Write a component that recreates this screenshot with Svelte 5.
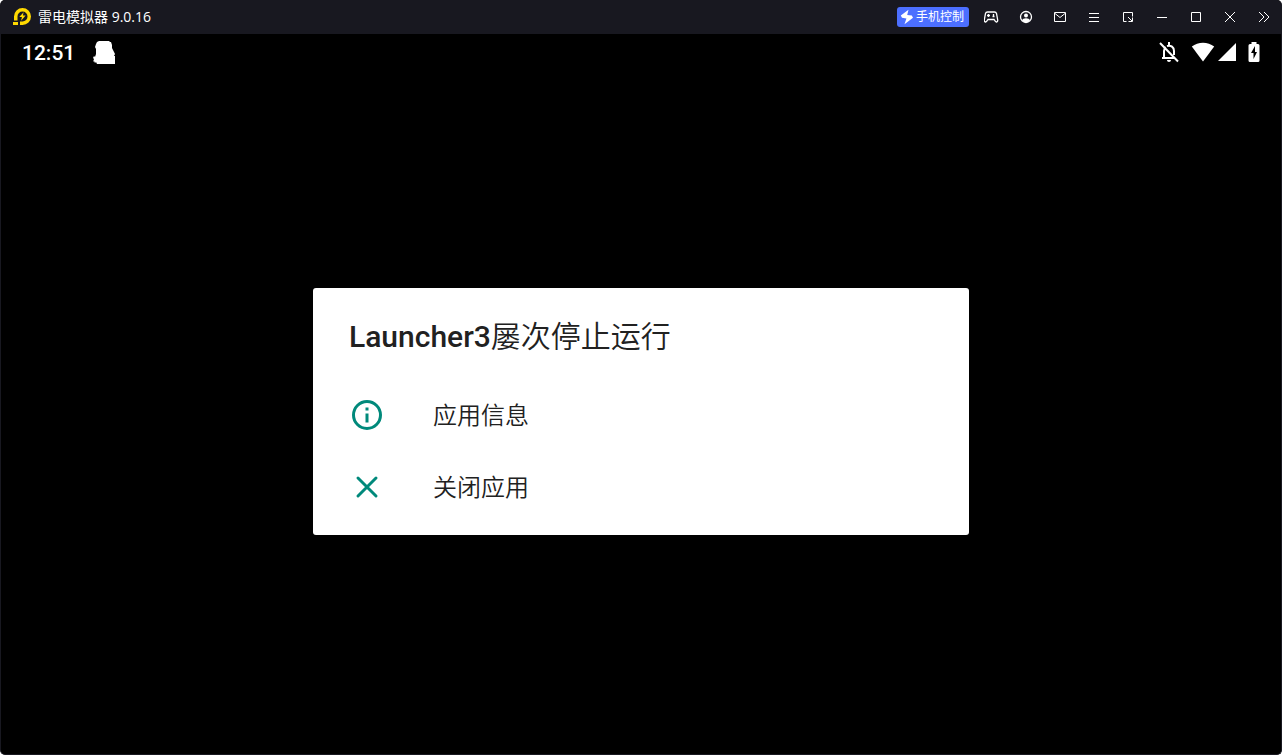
<script lang="ts">
	// Emulator window: desktop title bar, Android status bar and the crash dialog.
	const title = '雷电模拟器 9.0.16';
	const appName = 'Launcher3';
</script>

<div class="window">
	<header class="titlebar">
		<svg class="logo" width="20" height="20" viewBox="0 0 20 20" aria-hidden="true">
			<path d="M2 13.500V9.500a8.500 8.500 0 1 1 8.500 8.500H8v-3.500h2.500A5 5 0 1 0 5.500 9.500v4z" fill="#ffd900" />
			<path d="M1 15h5v3H1z" fill="#ffd900" />
			<path d="M11.600 5.200 7.300 10h2.600l-.8 3.800 4.500-5.200h-2.700z" fill="#ffd900" />
		</svg>
		<h1>{title}</h1>

		<button class="phone">
			<svg width="14" height="16" viewBox="0 0 14 16" aria-hidden="true">
				<path d="M8.500.8.800 6.500 2 8.800l4.400.7-1.900 5.700 8.500-6.400-1.200-2.300-4.600-.5z" fill="#fff" />
			</svg>
			<span>手机控制</span>
		</button>

		<nav class="tools">
			<button aria-label="手柄">
				<svg width="16" height="16" viewBox="0 0 16 16">
					<path
						d="M3.500 3h7c1.200 0 1.700.5 2 1.500l1.200 6.500c.2 2-1.500 2.600-2.500 1.200L10 10.500H4l-1.200 1.700C1.800 13.600.1 13 .3 11l1.200-6.500C1.800 3.500 2.300 3 3.500 3z"
						class="pad"
					/>
					<path d="M4.500 5v3M3 6.500h3M9.500 5v2M8.500 7.500h2" class="pad" />
				</svg>
			</button>
			<button aria-label="账号">
				<svg width="16" height="16" viewBox="0 0 16 16">
					<circle cx="8" cy="8" r="5.500" class="pad" />
					<circle cx="8" cy="6.500" r="2" class="solid" />
					<path d="M4 11.500c.6-3 7.400-3 8 0-1.800 2.600-6.200 2.600-8 0z" class="solid" />
				</svg>
			</button>
			<button aria-label="消息">
				<svg width="16" height="16" viewBox="0 0 16 16">
					<path d="M2.500 3.500h11v9h-11zM3 4.500l5 4 5-4" />
				</svg>
			</button>
			<button aria-label="菜单">
				<svg width="16" height="16" viewBox="0 0 16 16">
					<path d="M3 4.500h10M3 8.500h10M3 12.500h10" />
				</svg>
			</button>
			<button aria-label="小窗">
				<svg width="16" height="16" viewBox="0 0 16 16">
					<path d="M6.500 12.500h-3v-9h9v4M8 8l4 4M12.500 8.500v4h-4" />
				</svg>
			</button>
			<button aria-label="最小化">
				<svg width="16" height="16" viewBox="0 0 16 16"><path d="M3 8.500h10" /></svg>
			</button>
			<button aria-label="最大化">
				<svg width="16" height="16" viewBox="0 0 16 16"><path d="M3.500 3.500h9v9h-9z" /></svg>
			</button>
			<button aria-label="关闭">
				<svg width="16" height="16" viewBox="0 0 16 16"><path d="m3 3 10 10M13 3 3 13" /></svg>
			</button>
			<button aria-label="展开">
				<svg width="16" height="16" viewBox="0 0 16 16">
					<path d="m3 3 5 5-5 5M8 3l5 5-5 5" />
				</svg>
			</button>
		</nav>
	</header>

	<div class="status">
		<time>12:51</time>
		<svg class="notice" width="24" height="24" viewBox="0 0 24 24" aria-hidden="true">
			<path
				d="M8 1h10l1 1h1l1 3v3l2 4 1 2-1 2h1v8H6l-1-2-1 1-1-2-1 1 1-3-1-1 1-2 1 1 1-3V9L4 7l1-3 1-2z"
				fill="#fff"
			/>
		</svg>

		<svg class="bell" width="24" height="24" viewBox="0 0 24 24" aria-hidden="true">
			<path d="M12 22c1.100 0 2-.9 2-2h-4c0 1.100.9 2 2 2z" />
			<path
				d="M7 18v-7c0-1.600.6-3 1.700-3.900M10 6c4-1.200 7 1.200 7 5v4M5 18h12M12 2v3M3 3l18 18.500"
				class="line"
			/>
		</svg>
		<svg class="wifi" width="24" height="20" viewBox="0 0 24 20" aria-hidden="true">
			<path d="M12 19.500.8 4.500C7-.6 17-.6 23.200 4.500z" />
		</svg>
		<svg class="signal" width="18" height="18" viewBox="0 0 18 18" aria-hidden="true">
			<path d="M0 18 18 0v18z" />
		</svg>
		<svg class="battery" width="12" height="20" viewBox="0 0 12 20" aria-hidden="true">
			<path
				d="M3.500 0h5v2H10q1.500 0 1.500 1.500v15Q11.500 20 10 20H2Q.5 20 .5 18.500v-15Q.5 2 2 2h1.500z"
			/>
			<path d="M7 4 3 11h2.500v6L9 10H7z" class="bolt" />
		</svg>
	</div>

	<main>
		<div class="dialog" role="alertdialog" aria-labelledby="crash-title">
			<h2 id="crash-title"><b>{appName}</b>屡次停止运行</h2>
			<button class="row">
				<svg width="36" height="36" viewBox="0 0 24 24" aria-hidden="true">
					<path
						d="M11 7h2v2h-2zm0 4h2v6h-2zm1-9a10 10 0 1 0 0 20 10 10 0 0 0 0-20zm0 18a8 8 0 1 1 0-16 8 8 0 0 1 0 16z"
					/>
				</svg>
				<span>应用信息</span>
			</button>
			<button class="row">
				<svg width="36" height="36" viewBox="0 0 24 24" aria-hidden="true">
					<path d="m6 6 12 12M18 6 6 18" class="cross" />
				</svg>
				<span>关闭应用</span>
			</button>
		</div>
	</main>
</div>

<style>
	:global(body) {
		background: #fff;
	}
	.window {
		box-sizing: border-box;
		min-height: 100vh;
		display: flex;
		flex-direction: column;
		border: 1px solid #181820;
		border-top: 0;
		border-radius: 5px;
		overflow: hidden;
		background: #000;
		font-family: Roboto, 'Noto Sans CJK SC', sans-serif;
	}
	button {
		padding: 0;
		border: 0;
		background: none;
		font: inherit;
		color: inherit;
		cursor: pointer;
	}
	svg {
		display: block;
		flex: none;
	}

	/* Desktop title bar */
	.titlebar {
		height: 34px;
		display: flex;
		align-items: center;
		background: #181820;
		color: #fff;
	}
	.logo {
		margin-left: 11px;
	}
	h1 {
		flex: 1;
		margin: 0 0 0 6px;
		font: 400 14px/20px 'Open Sans', 'Noto Sans CJK SC', sans-serif;
	}
	.phone {
		display: flex;
		align-items: center;
		gap: 2px;
		height: 20px;
		padding: 0 5px 0 3px;
		margin-right: 6px;
		border-radius: 3px;
		background: #4c6fff;
		font-size: 12px;
		line-height: 20px;
	}
	.tools {
		display: flex;
	}
	.tools button {
		width: 34px;
		height: 34px;
		display: flex;
		align-items: center;
		justify-content: center;
	}
	.tools svg {
		fill: none;
		stroke: #fff;
		stroke-width: 1;
	}
	.tools .pad {
		stroke-width: 1.3;
	}
	.tools .solid {
		fill: #fff;
		stroke: none;
	}

	/* Android status bar */
	.status {
		height: 36px;
		display: flex;
		align-items: center;
		padding: 0 21px;
		color: #fff;
	}
	.status svg {
		fill: #fff;
	}
	.status .line {
		fill: none;
		stroke: #fff;
		stroke-width: 2;
	}
	.status .bolt {
		fill: #000;
	}
	time {
		font-size: 21px;
		font-weight: 500;
		line-height: 34px;
		padding-top: 2px;
	}
	.notice {
		margin-left: 16px;
	}
	.bell {
		margin-left: auto;
	}
	.wifi {
		margin-left: 10px;
	}
	.signal {
		margin-left: 3px;
	}
	.battery {
		margin-left: 12px;
	}

	/* Crash dialog */
	main {
		flex: 1;
		display: flex;
		align-items: center;
		justify-content: center;
		padding-bottom: 2px;
	}
	.dialog {
		box-sizing: border-box;
		width: 656px;
		max-width: 100%;
		padding: 27px 0 12px;
		border-radius: 3px;
		background: #fff;
		color: #212121;
	}
	h2 {
		margin: 0 0 20px;
		padding: 0 36px;
		font-size: 30px;
		font-weight: 350;
		line-height: 44px;
	}
	h2 b {
		font-weight: 500;
	}
	.row {
		width: 100%;
		height: 72px;
		display: flex;
		align-items: center;
		gap: 48px;
		padding: 0 36px;
		font-size: 24px;
		font-weight: 350;
		text-align: left;
	}
	.row span {
		padding-bottom: 2px;
	}
	.row svg {
		fill: #00897b;
	}
	.row .cross {
		stroke: #00897b;
		stroke-width: 2;
		stroke-linecap: round;
	}
</style>
